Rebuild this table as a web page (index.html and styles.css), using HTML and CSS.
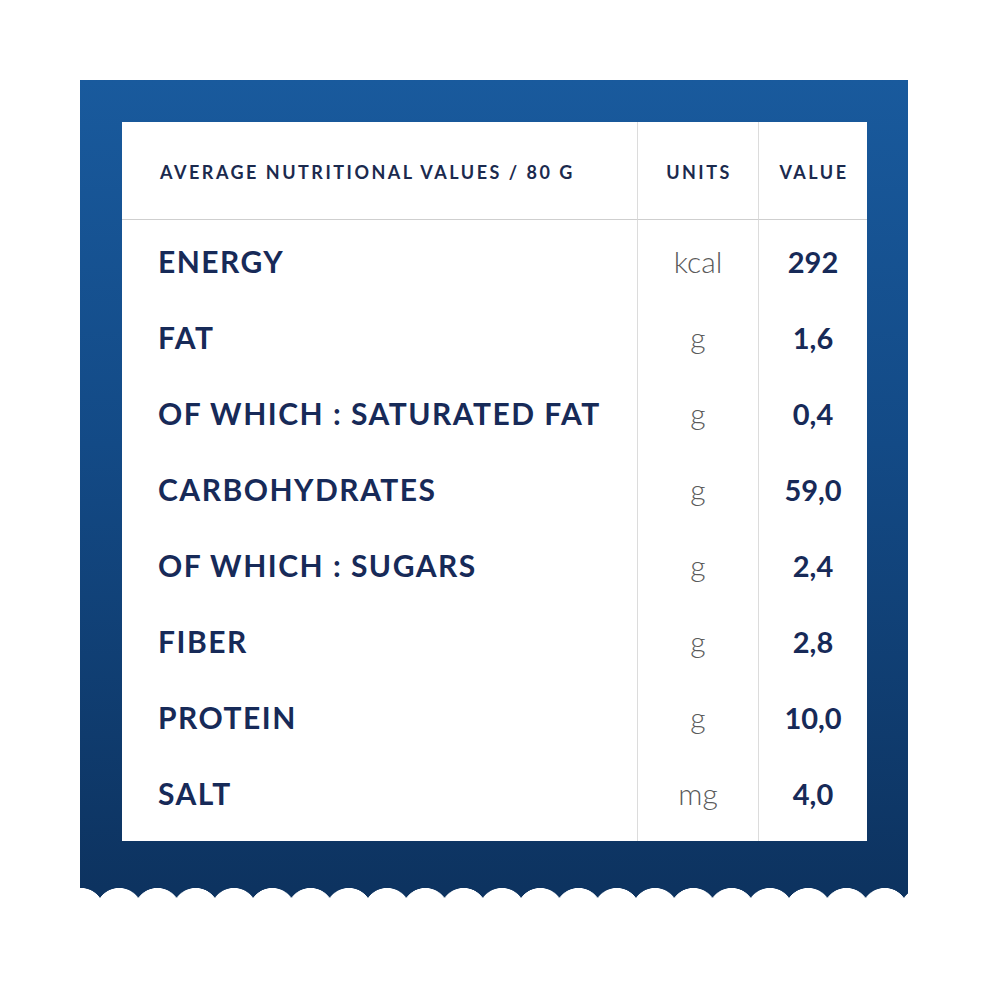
FILE: index.html
```html
<!DOCTYPE html>
<html lang="en">
<head>
<meta charset="utf-8">
<title>Nutritional values</title>
<link rel="stylesheet" href="styles.css">
</head>
<body>
<div class="wrap">
  <div class="box">
    <div class="table">
      <div class="row head">
        <div class="cell name">AVERAGE NUTRITIONAL VALUES / 80 G</div>
        <div class="cell unit">UNITS</div>
        <div class="cell val">VALUE</div>
      </div>
      <div class="body">
        <div class="row"><div class="cell name">ENERGY</div><div class="cell unit">kcal</div><div class="cell val">292</div></div>
        <div class="row"><div class="cell name">FAT</div><div class="cell unit">g</div><div class="cell val">1,6</div></div>
        <div class="row"><div class="cell name">OF WHICH : SATURATED FAT</div><div class="cell unit">g</div><div class="cell val">0,4</div></div>
        <div class="row"><div class="cell name">CARBOHYDRATES</div><div class="cell unit">g</div><div class="cell val">59,0</div></div>
        <div class="row"><div class="cell name">OF WHICH : SUGARS</div><div class="cell unit">g</div><div class="cell val">2,4</div></div>
        <div class="row"><div class="cell name">FIBER</div><div class="cell unit">g</div><div class="cell val">2,8</div></div>
        <div class="row"><div class="cell name">PROTEIN</div><div class="cell unit">g</div><div class="cell val">10,0</div></div>
        <div class="row"><div class="cell name">SALT</div><div class="cell unit">mg</div><div class="cell val">4,0</div></div>
      </div>
    </div>
  </div>
  <div class="wave"></div>
</div>
</body>
</html>
```
FILE: styles.css
```css
* { box-sizing: border-box; }
html, body { margin: 0; padding: 0; background: #fff; }
body { font-family: "Lato", "Liberation Sans", sans-serif; color: #172a55; }

.wrap { padding: 80px 92px 0 80px; }

.box {
  background: linear-gradient(180deg, #195a9d 0%, #134a86 45%, #0d3360 100%);
  padding: 42px 41px 47px 42px;
}

.table { background: #fff; width: 745px; }

.row { display: grid; grid-template-columns: 515px 121px 109px; }

.cell { display: flex; align-items: center; box-sizing: content-box; }
.cell + .cell { border-left: 1px solid #dcdcdc; justify-content: center; }
.unit { width: 120px; }
.val { width: 108px; }

.head .cell {
  height: 94px;
  padding-top: 3px;
  border-bottom: 1px solid #cfcfcf;
  font-size: 18px;
  font-weight: 700;
  letter-spacing: 2.5px;
  color: #1b2a4e;
}
.head .name { padding-left: 38px; }
.head .unit, .head .val { padding-left: 2px; width: 118px; }
.head .val { width: 106px; }

.body .cell { height: 76px; }
.body .row:first-child .cell { padding-top: 3px; }
.body .row:last-child .cell { padding-bottom: 10px; }

.body .name {
  padding-left: 36px;
  font-size: 30px;
  font-weight: 700;
  letter-spacing: 1.5px;
  color: #172a58;
}
.body .unit {
  font-size: 30px;
  font-weight: 300;
  color: #5a5a5a;
}
.body .val {
  font-size: 29px;
  font-weight: 700;
  color: #172a58;
}

.wave {
  height: 10px;
  background: radial-gradient(circle 23.3px at 50% 23.3px, #fff 23px, #0d3360 23.6px);
  background-size: 38.29px 10px;
  background-position: 20px 0;
  background-repeat: repeat-x;
}
```
